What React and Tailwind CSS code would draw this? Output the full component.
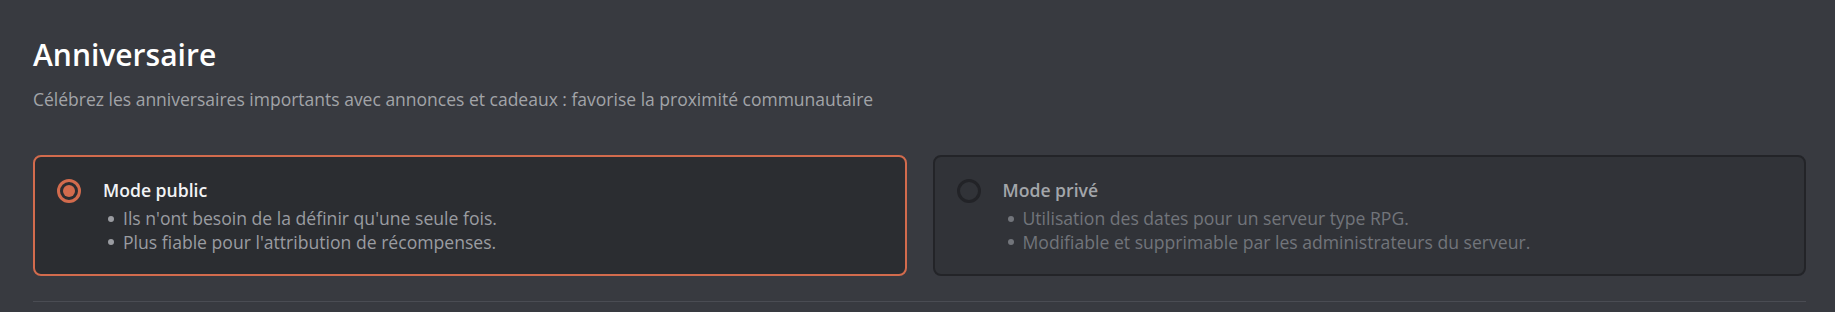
import React, { useState } from 'react';

const modes = [
  {
    id: 'public',
    title: 'Mode public',
    points: [
      "Ils n'ont besoin de la définir qu'une seule fois.",
      "Plus fiable pour l'attribution de récompenses.",
    ],
  },
  {
    id: 'private',
    title: 'Mode privé',
    points: [
      'Utilisation des dates pour un serveur type RPG.',
      'Modifiable et supprimable par les administrateurs du serveur.',
    ],
  },
];

const ModeCard = ({ mode, selected, onSelect }) => (
  <button
    type="button"
    onClick={onSelect}
    className={`flex items-start gap-[22px] rounded-lg border-2 px-[22px] pt-[21px] pb-[20px] text-left ${
      selected ? 'border-[#d26b4d] bg-[#2b2d31]' : 'border-[#232428] bg-[#313338]'
    }`}
  >
    <span
      className={`mt-[1px] flex h-[24px] w-[24px] shrink-0 items-center justify-center rounded-full border-[3px] ${
        selected ? 'border-[#d26b4d]' : 'border-[#222327]'
      }`}
    >
      {selected && <span className="h-[12px] w-[12px] rounded-full bg-[#d26b4d]" />}
    </span>
    <div className="flex flex-col">
      <span
        className={`text-[17.6px] font-semibold leading-[24px] ${
          selected ? 'text-[#f2f3f5]' : 'text-[#a3a6aa]'
        }`}
      >
        {mode.title}
      </span>
      <ul className={`mt-[5px] ${selected ? 'text-[#9a9ca1]' : 'text-[#72757b]'}`}>
        {mode.points.map((p) => (
          <li key={p} className="flex items-center text-[17.6px] leading-[23.5px]">
            <span className="ml-[5px] mr-[9px] h-[6px] w-[6px] rounded-full bg-current" />
            {p}
          </li>
        ))}
      </ul>
    </div>
  </button>
);

export default function App() {
  const [mode, setMode] = useState('public');

  return (
    <div
      className="min-h-[312px] bg-[#383a40] pl-[33px] pr-[29px] pt-[37px]"
      style={{ fontFamily: '"Open Sans", "Noto Sans", sans-serif' }}
    >
      <h2 className="text-[30px] font-semibold leading-[36px] text-white">Anniversaire</h2>
      <p className="mt-[14px] text-[17.5px] leading-[24px] text-[#a2a4a8]">
        Célébrez les anniversaires importants avec annonces et cadeaux : favorise la proximité communautaire
      </p>
      <div className="mt-[44px] grid grid-cols-2 gap-[26px]">
        {modes.map((m) => (
          <ModeCard key={m.id} mode={m} selected={mode === m.id} onSelect={() => setMode(m.id)} />
        ))}
      </div>
      <div className="mt-[25px] h-px bg-[#4a4c53]" />
    </div>
  );
}
